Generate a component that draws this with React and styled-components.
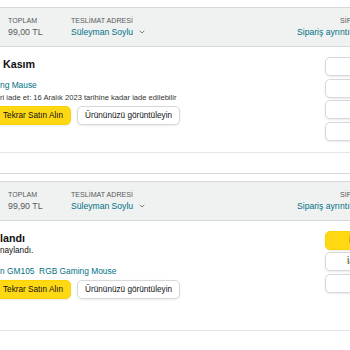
import React from "react";
import styled, { createGlobalStyle, css } from "styled-components";

const GlobalStyle = createGlobalStyle`
  html, body { margin: 0; padding: 0; background: #fff; }
  body {
    width: 350px; height: 350px; overflow: hidden;
    font-family: "Liberation Sans", Arial, sans-serif;
    color: #0f1111;
  }
`;

const Viewport = styled.div`
  width: 350px;
  height: 350px;
  overflow: hidden;
`;

const Page = styled.div`
  display: flex;
  flex-direction: column;
  gap: 7px;
  padding-top: 7px;
  margin-left: -20px;
  width: 511px;
`;

const Card = styled.section`
  border: 1px solid #d5d9d9;
  border-radius: 5px;
  overflow: hidden;
  background: #fff;
`;

const Header = styled.div`
  display: grid;
  grid-template-columns: 63px 226px 1fr;
  padding: 8px 0 8px 27px;
  background: #f0f2f2;
  border-bottom: 1px solid #d5d9d9;
`;

const HeaderCol = styled.div`
  display: flex;
  flex-direction: column;
  align-items: flex-start;
  white-space: nowrap;
`;

const Label = styled.span`
  font-size: 7.1px;
  line-height: 10px;
  color: #565959;
  margin-left: ${(p) => p.$indent || 0}px;
`;

const Value = styled.span`
  font-size: 8.8px;
  line-height: 12px;
  color: #565959;
`;

const HeaderLink = styled.a`
  display: inline-flex;
  align-items: center;
  gap: 6px;
  font-size: 8.6px;
  line-height: 12px;
  color: #007185;
  text-decoration: none;
`;

const Chevron = () => (
  <svg width="6" height="4" viewBox="0 0 6 4" fill="none">
    <path d="M0.7 0.8 L3 3 L5.3 0.8" stroke="#6f7373" strokeWidth="0.9" />
  </svg>
);

const Body = styled.div`
  display: grid;
  grid-template-columns: 325px 150px;
  padding: 10px 15px 11px 19px;
`;

const LeftCol = styled.div`
  display: flex;
  flex-direction: column;
  white-space: nowrap;
`;

const Heading = styled.h3`
  margin: 0;
  font-size: 10.7px;
  line-height: 14px;
  font-weight: 700;
  color: #0f1111;
`;

const SubText = styled.p`
  margin: 0;
  font-size: 8.2px;
  line-height: 12px;
  color: #0f1111;
`;

const ProductRow = styled.div`
  margin-top: 8px;
  min-height: 54px;
  display: flex;
  flex-direction: column;
`;

const ProductLink = styled.a`
  font-size: 8.4px;
  line-height: 12px;
  color: #007185;
  text-decoration: none;
  white-space: pre;
`;

const ReturnNote = styled.p`
  margin: 1px 0 0;
  font-size: 7.6px;
  line-height: 11px;
  color: #333;
`;

const ButtonRow = styled.div`
  display: flex;
  gap: 6px;
  margin-top: 3px;
`;

const Button = styled.button`
  box-sizing: border-box;
  height: 19px;
  padding: 0 7px;
  border-radius: 5px;
  border: 1px solid #d5d9d9;
  background: #fff;
  color: #0f1111;
  font-family: inherit;
  font-size: 8.2px;
  white-space: nowrap;
  box-shadow: 0 1px 2px rgba(213, 217, 217, 0.5);
  cursor: pointer;
  ${(p) =>
    p.$primary &&
    css`
      background: #ffd814;
      border-color: #fcd200;
    `}
`;

const BuyAgain = styled(Button)`
  margin-left: -13px;
  padding-left: 15px;
`;

const RightCol = styled.div`
  display: flex;
  flex-direction: column;
  gap: 2.5px;
`;

const ActionButton = styled(Button)`
  width: 100%;
  text-align: center;
`;

const Footer = styled.div`
  border-top: 1px solid #e3e6e6;
  height: 20px;
`;

const orders = [
  {
    total: "99,00 TL",
    heading: "\u00a0Kasım",
    sub: null,
    product: "ng Mause",
    note: "ri iade et: 16 Aralık 2023 tarihine kadar iade edilebilir",
    actions: [
      { label: "Paketi takip et" },
      { label: "Ürünleri iade et" },
      { label: "Satıcıyı değerlendir" },
      { label: "Ürün yorumu yaz" },
    ],
  },
  {
    total: "99,90 TL",
    heading: "landı",
    sub: "naylandı.",
    product: "n GM105\u00a0 RGB Gaming Mouse",
    note: null,
    actions: [
      { label: "İade durumunu görüntüleyin", primary: true },
      { label: "İade ayrıntılarını görüntüleyin" },
      { label: "Ürün yorumu yaz" },
    ],
  },
];

function OrderCard({ order }) {
  return (
    <Card>
      <Header>
        <HeaderCol>
          <Label>TOPLAM</Label>
          <Value>{order.total}</Value>
        </HeaderCol>
        <HeaderCol>
          <Label>TESLİMAT ADRESİ</Label>
          <HeaderLink href="#">
            Süleyman Soylu <Chevron />
          </HeaderLink>
        </HeaderCol>
        <HeaderCol>
          <Label $indent={43}>SİPARİŞ # 407-6482931-2275530</Label>
          <HeaderLink href="#">Sipariş ayrıntılarını görüntüleyin</HeaderLink>
        </HeaderCol>
      </Header>
      <Body>
        <LeftCol>
          <Heading>{order.heading}</Heading>
          {order.sub && <SubText>{order.sub}</SubText>}
          <ProductRow>
            <ProductLink href="#">{order.product}</ProductLink>
            {order.note && <ReturnNote>{order.note}</ReturnNote>}
            <ButtonRow>
              <BuyAgain $primary>Tekrar Satın Alın</BuyAgain>
              <Button>Ürününüzü görüntüleyin</Button>
            </ButtonRow>
          </ProductRow>
        </LeftCol>
        <RightCol>
          {order.actions.map((a) => (
            <ActionButton key={a.label} $primary={a.primary}>
              {a.label}
            </ActionButton>
          ))}
        </RightCol>
      </Body>
      <Footer />
    </Card>
  );
}

export default function App() {
  return (
    <>
      <GlobalStyle />
      <Viewport>
        <Page>
          {orders.map((o, i) => (
            <OrderCard key={i} order={o} />
          ))}
        </Page>
      </Viewport>
    </>
  );
}
